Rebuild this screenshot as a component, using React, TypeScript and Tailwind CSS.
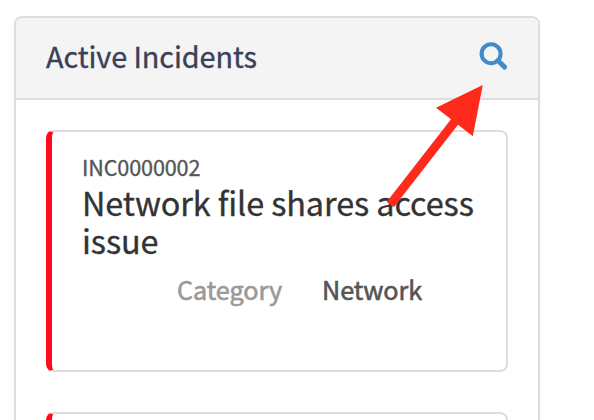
import React from "react";

function SearchIcon() {
  return (
    <svg width="28" height="28" viewBox="0 0 28 28" fill="none" stroke="#428bca" className="mb-1 block">
      <circle cx="12.1" cy="11.7" r="9.5" strokeWidth="4.1" />
      <path d="M19 18.6L25.5 25.1" strokeWidth="5" strokeLinecap="round" />
    </svg>
  );
}

function IncidentCard({ children }: { children?: React.ReactNode }) {
  return (
    <article className="h-[242px] shrink-0 rounded-lg border-2 border-l-[6px] border-[#dddddd] border-l-[#ff0a1e] bg-white pt-[21px] pl-[30px]">
      {children}
    </article>
  );
}

export default function App() {
  return (
    <main className="relative h-[420px] w-[594px] overflow-hidden bg-white pt-4 pl-[14px] font-['Noto_Sans_CJK_SC',sans-serif] [-webkit-text-stroke-width:0.35px]">
      <section className="h-[500px] w-[526px] rounded-lg border-2 border-[#dddddd] bg-white shadow-[0_2px_2px_rgba(0,0,0,0.05)]">
        <header className="flex h-[82px] items-center justify-between rounded-t-md border-b-2 border-[#dddddd] bg-[#f4f4f4] pr-[31px] pl-[30px]">
          <h1 className="mb-1 text-[28.8px] leading-9 tracking-[-0.07px] text-[#3b4056]">Active Incidents</h1>
          <SearchIcon />
        </header>
        <div className="flex flex-col gap-10 px-[30px] pt-[30px]">
          <IncidentCard>
            <p className="text-[21.6px] leading-7 tracking-[-0.13px] text-[#555555]">INC0000002</p>
            <h2 className="mt-[2px] w-[410px] text-[32.4px] leading-[38px] tracking-[-0.08px] text-[#333333]">
              Network file shares access issue
            </h2>
            <div className="mt-[15px] flex pl-[95px] text-[25.2px] leading-[30px] tracking-[-0.05px] [-webkit-text-stroke-width:0.6px]">
              <span className="w-[145px] text-[#999999]">Category</span>
              <span className="text-[#555555]">Network</span>
            </div>
          </IncidentCard>
          <IncidentCard />
        </div>
      </section>
      <svg className="pointer-events-none absolute inset-0" width="594" height="420" viewBox="0 0 594 420">
        <path d="M482.8 85L436 107.7L451 119.3L386.8 201.8L393.8 207.3L458 124.7L472.8 136.2Z" fill="#ff2a1c" />
      </svg>
    </main>
  );
}
